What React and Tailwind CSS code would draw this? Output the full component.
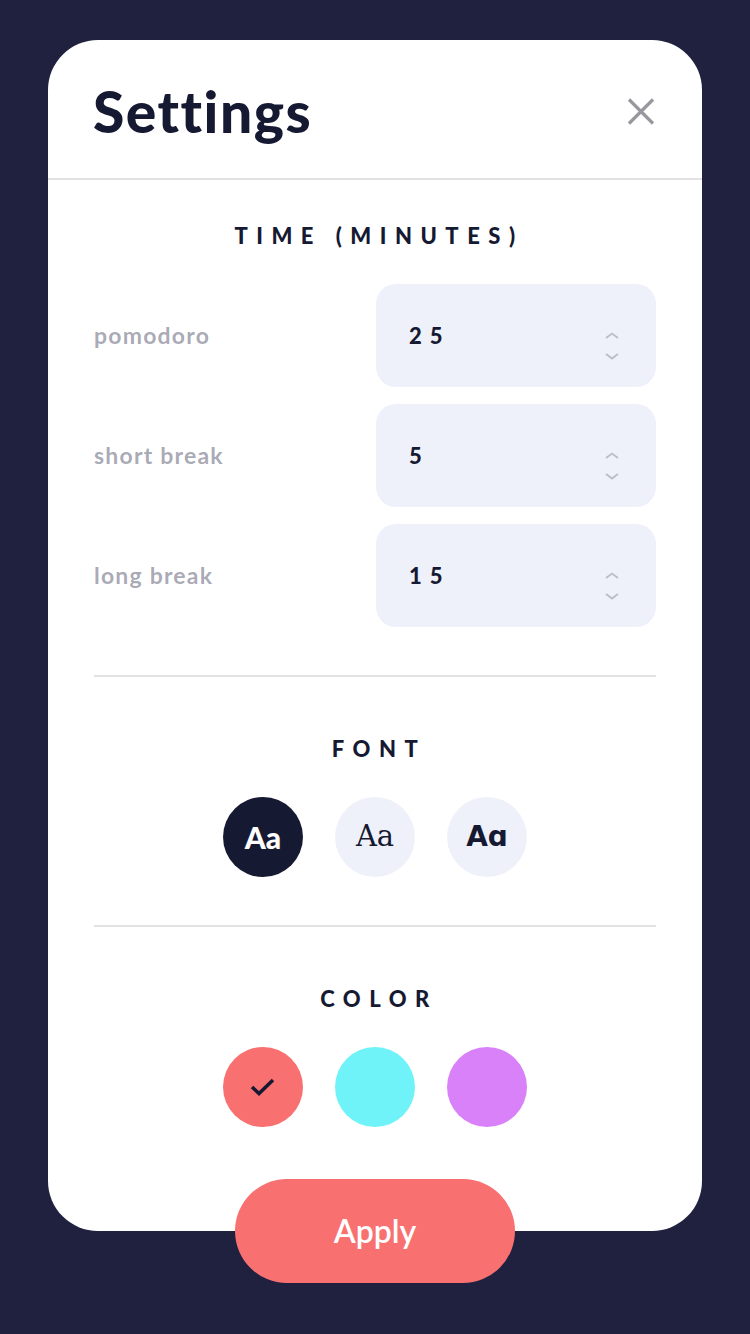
import React from "react";

const sans = { fontFamily: "Lato, 'Open Sans', sans-serif" };

function Chevrons() {
  return (
    <div className="mt-[21px] flex flex-col items-center gap-[14px]">
      <svg width="14" height="7" viewBox="0 0 14 7" fill="none">
        <path d="M1 6L7 1.5L13 6" stroke="#1E213F" strokeOpacity="0.25" strokeWidth="1.8" />
      </svg>
      <svg width="14" height="7" viewBox="0 0 14 7" fill="none">
        <path d="M1 1L7 5.5L13 1" stroke="#1E213F" strokeOpacity="0.25" strokeWidth="1.8" />
      </svg>
    </div>
  );
}

function TimeRow({ label, value }) {
  return (
    <div className="flex items-center justify-between">
      <span className="text-[23px] font-bold tracking-[1.2px] text-[#1E213F]/40">{label}</span>
      <div className="flex h-[103px] w-[280px] items-center justify-between rounded-[20px] bg-[#EFF1FA] pl-[33px] pr-[37px]">
        <span className="text-[22px] font-black tracking-[8px] text-[#161932]">{value}</span>
        <Chevrons />
      </div>
    </div>
  );
}

function Heading({ children }) {
  return (
    <h2 className="text-center text-[22px] font-black leading-[30px] tracking-[8.5px] text-[#161932] pl-[8px]">
      {children}
    </h2>
  );
}

export default function App() {
  return (
    <div className="flex min-h-[1334px] flex-col bg-[#1F213F] px-[48px] pt-[40px]" style={sans}>
      <div className="rounded-[50px] bg-white">
        <div className="flex h-[140px] items-center justify-between border-b-2 border-[#E3E1E1] pl-[45px] pr-[47px] pt-[5px]">
          <h1 className="text-[57px] font-black tracking-[1.5px] text-[#161932]">Settings</h1>
          <svg width="28" height="27" viewBox="0 0 28 27" fill="none">
            <path d="M2 1.5L26 25.5M26 1.5L2 25.5" stroke="#97989E" strokeWidth="3.2" />
          </svg>
        </div>
        <div className="px-[46px]">
          <div className="border-b-2 border-[#E3E1E1] pt-[41px] pb-[48px]">
            <Heading>TIME (MINUTES)</Heading>
            <div className="mt-[33px] flex flex-col gap-[17px]">
              <TimeRow label="pomodoro" value="25" />
              <TimeRow label="short break" value="5" />
              <TimeRow label="long break" value="15" />
            </div>
          </div>
          <div className="border-b-2 border-[#E3E1E1] pt-[57px] pb-[48px]">
            <Heading>FONT</Heading>
            <div className="mt-[33px] flex justify-center gap-[32px]">
              <div className="flex h-[80px] w-[80px] items-center justify-center rounded-full bg-[#161932] text-[30px] font-black text-white">
                Aa
              </div>
              <div
                className="flex h-[80px] w-[80px] items-center justify-center rounded-full bg-[#EFF1FA] text-[29px] text-[#161932]"
                style={{ fontFamily: "'DejaVu Serif', serif" }}
              >
                Aa
              </div>
              <div
                className="flex h-[80px] w-[80px] items-center justify-center rounded-full bg-[#EFF1FA] text-[28px] font-bold text-[#161932]"
                style={{ fontFamily: "'DejaVu Sans', sans-serif" }}
              >
                Aɑ
              </div>
            </div>
          </div>
          <div className="pt-[57px] pb-[104px]">
            <Heading>COLOR</Heading>
            <div className="mt-[33px] flex justify-center gap-[32px]">
              <div className="flex h-[80px] w-[80px] items-center justify-center rounded-full bg-[#F87070]">
                <svg width="28" height="22" viewBox="0 0 28 22" fill="none">
                  <path d="M3 11L10 17.5L24 4" stroke="#161932" strokeWidth="3.5" />
                </svg>
              </div>
              <div className="h-[80px] w-[80px] rounded-full bg-[#70F3F8]" />
              <div className="h-[80px] w-[80px] rounded-full bg-[#D881F8]" />
            </div>
          </div>
        </div>
      </div>
      <button className="-mt-[52px] flex h-[104px] w-[280px] items-center justify-center self-center rounded-full bg-[#F87070] text-[32px] font-semibold text-white">
        Apply
      </button>
    </div>
  );
}
